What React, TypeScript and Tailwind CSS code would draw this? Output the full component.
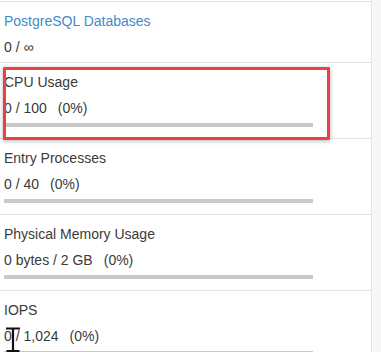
import type { ReactNode } from "react";

type Stat = {
  title: string;
  used: string;
  pct?: string;
  link?: boolean;
};

const stats: Stat[] = [
  { title: "PostgreSQL Databases", used: "0 / ∞", link: true },
  { title: "CPU Usage", used: "0 / 100", pct: "(0%)" },
  { title: "Entry Processes", used: "0 / 40", pct: "(0%)" },
  { title: "Physical Memory Usage", used: "0 bytes / 2 GB", pct: "(0%)" },
  { title: "IOPS", used: "0 / 1,024", pct: "(0%)" },
];

const Row = ({ stat, first }: { stat: Stat; first: boolean }): ReactNode => (
  <div className={`border-t border-[#e2e2e2] px-[4px] ${first ? "h-[61px]" : "h-[76px]"}`}>
    <div
      className={`mt-[9px] h-[20px] leading-[20px] ${
        stat.link ? "text-[#428bca]" : "text-[#3a3a3a]"
      }`}
    >
      {stat.title}
    </div>
    <div className="mt-[6px] h-[20px] leading-[20px] text-[#3a3a3a]">
      <span>{stat.used}</span>
      {stat.pct && <span className="ml-[11px]">{stat.pct}</span>}
    </div>
    {!stat.link && <div className="mt-[5px] h-[4px] w-[309px] bg-[#c9c9c9]" />}
  </div>
);

export default function App() {
  return (
    <div className="relative h-[352px] w-[381px] overflow-hidden bg-[#f7f7f7] font-['Liberation_Sans',Arial,sans-serif] text-[14px]">
      <div className="h-full w-[372px] border-r border-[#e6e6e6] bg-white pt-[1px]">
        {stats.map((stat, i) => (
          <Row key={stat.title} stat={stat} first={i === 0} />
        ))}
      </div>

      <div className="absolute left-[3px] top-[67px] h-[73px] w-[327px] rounded-[1px] border-[3px] border-[#ea4146] shadow-[0_1px_4px_rgba(0,0,0,0.3)]" />

      <svg className="absolute left-[5px] top-[326px]" width="18" height="27" viewBox="0 0 18 27">
        <path d="M1 2.5h14M8 2.5v22M1.5 25h13" stroke="#111" strokeWidth="2.2" fill="none" />
      </svg>
    </div>
  );
}
